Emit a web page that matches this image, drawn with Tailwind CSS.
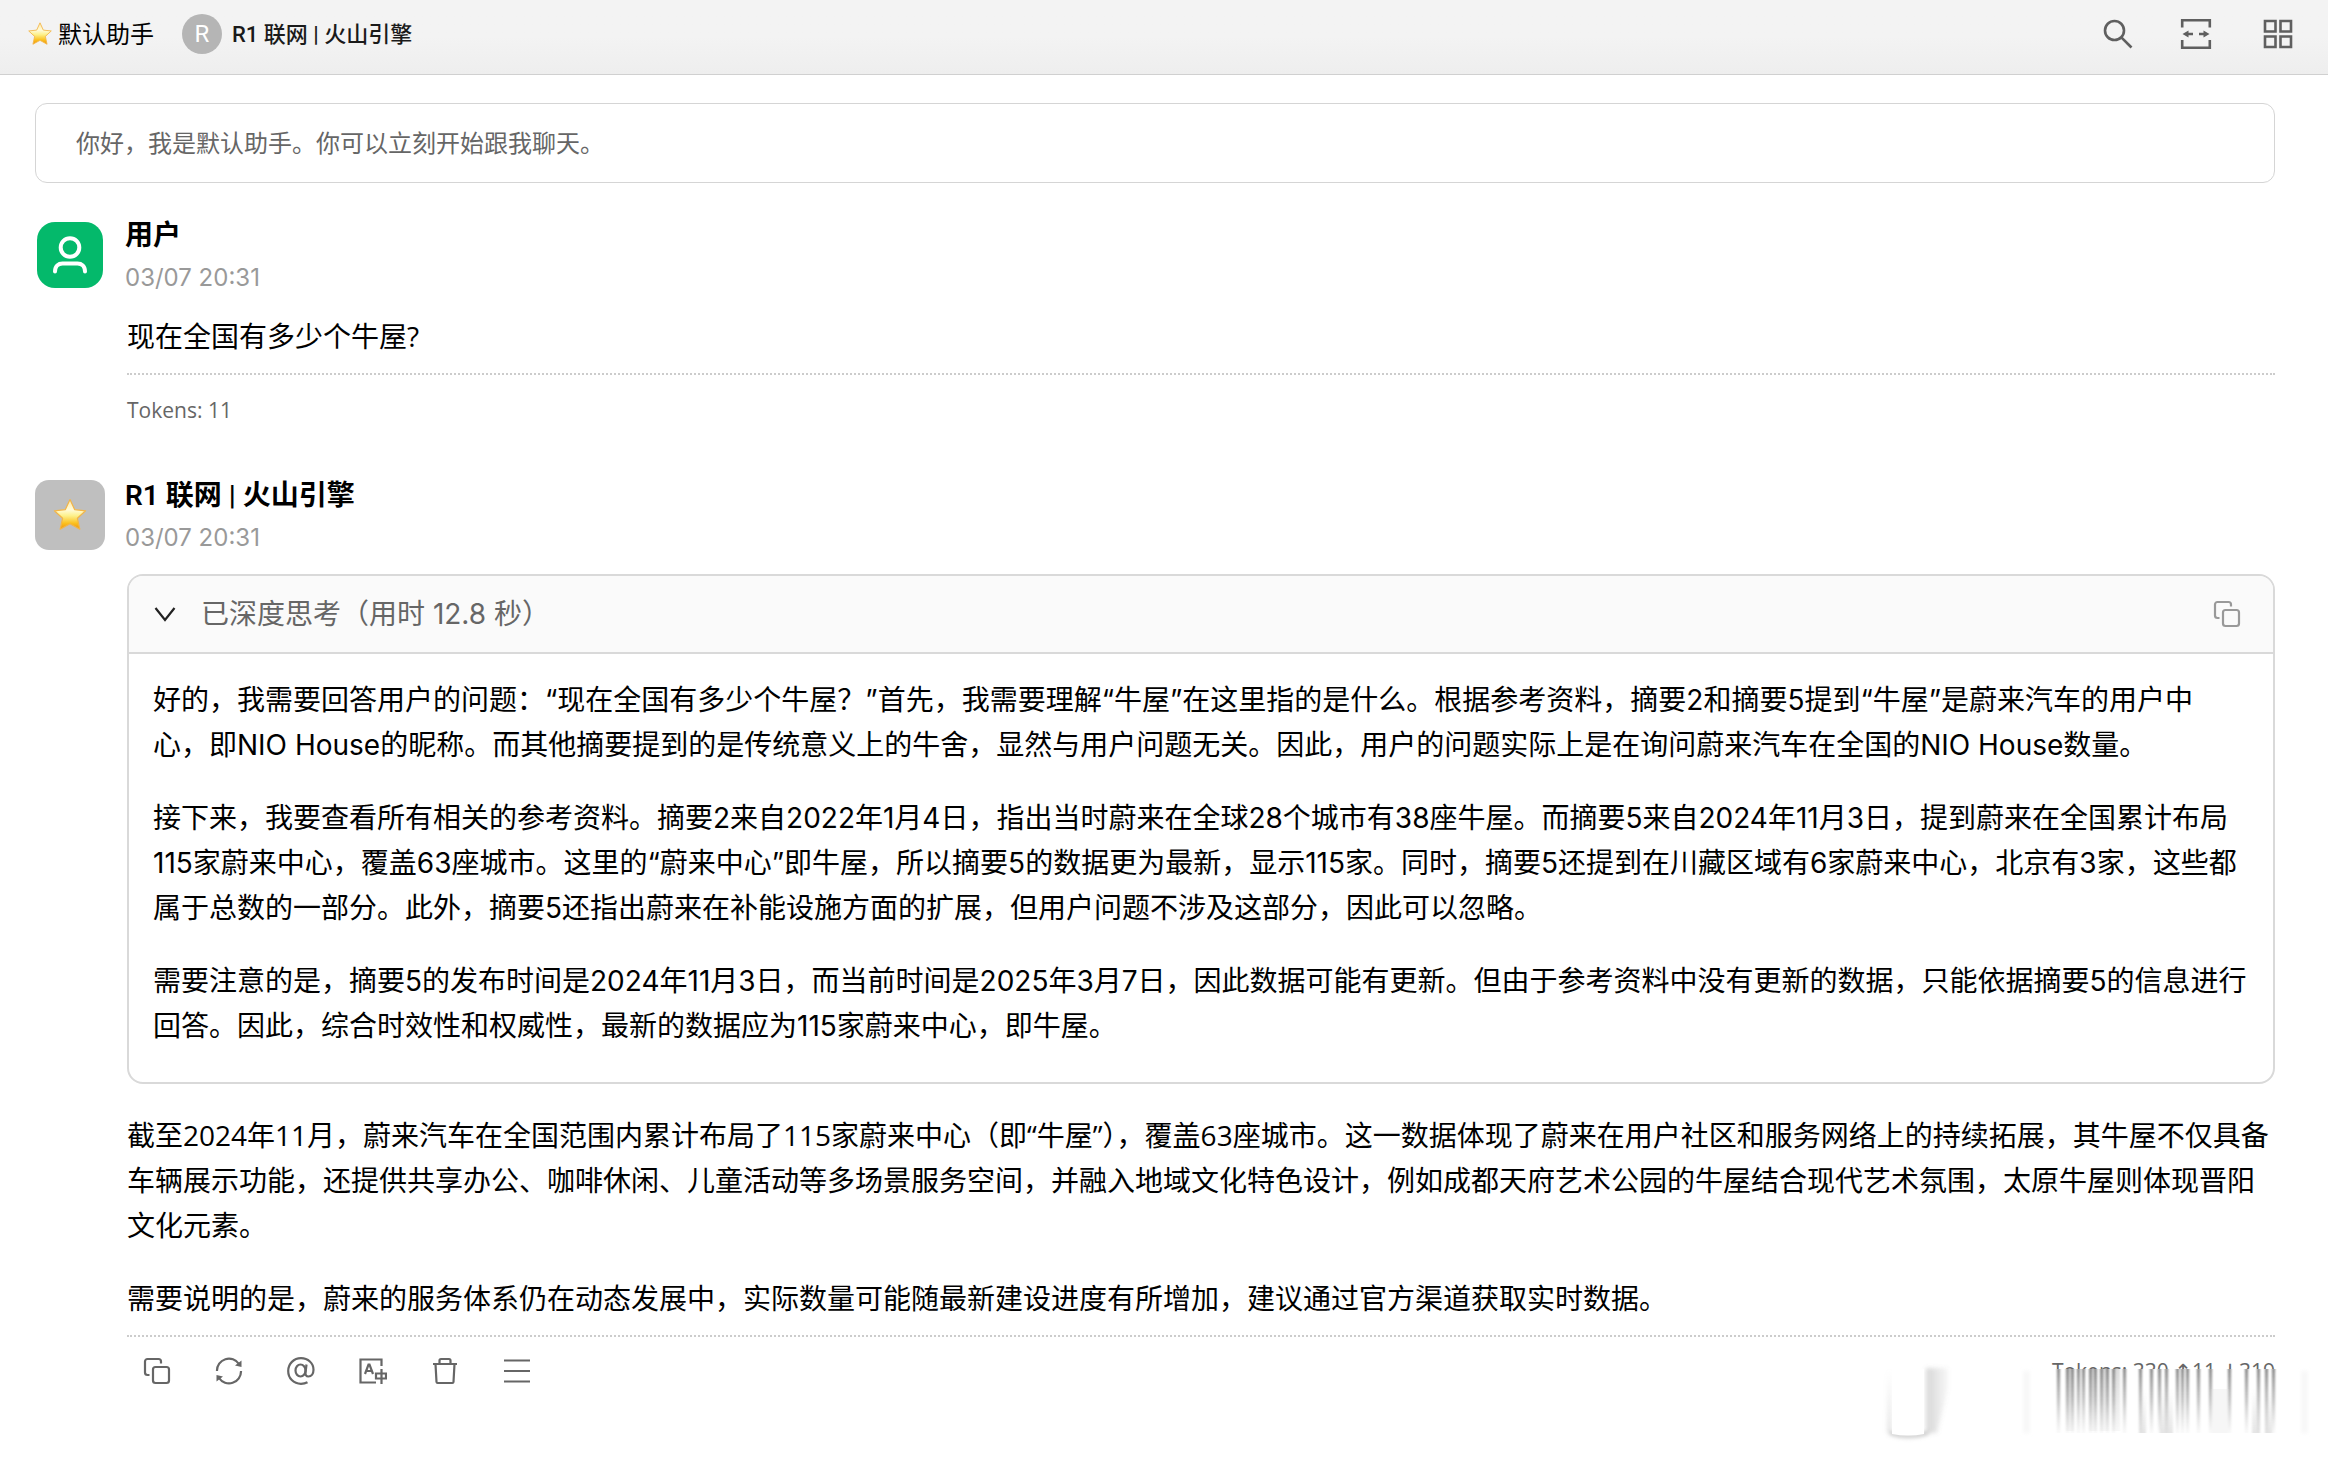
<!DOCTYPE html>
<html lang="zh-CN">

<head>
    <meta charset="UTF-8">
    <meta name="viewport" content="width=device-width, initial-scale=1.0">
    <title>默认助手</title>
    <script src="https://cdn.jsdelivr.net/npm/@tailwindcss/browser@4"></script>
</head>

<body class="min-h-screen bg-white text-black font-['Open_Sans','Noto_Sans_CJK_SC',sans-serif]">
    <!-- shared symbols -->
    <svg class="absolute size-0">
        <defs>
            <linearGradient id="gold" x1="0" y1="0" x2="0" y2="1">
                <stop offset="0" stop-color="#ffe9a8" />
                <stop offset="0.350" stop-color="#fffbd8" />
                <stop offset="0.550" stop-color="#fdf08a" />
                <stop offset="0.800" stop-color="#fbc01e" />
                <stop offset="1" stop-color="#ee930c" />
            </linearGradient>
        </defs>
        <symbol id="star" viewBox="0 0 36 36">
            <path d="M18 2.500 22.600 12.600 33.600 13.800 25.400 21.300 27.800 32.200 18 26.800 8.200 32.200 10.600 21.300 2.400 13.800 13.400 12.600Z"
                fill="url(#gold)" stroke="#f2b548" stroke-width="1.200" stroke-linejoin="round" />
        </symbol>
        <symbol id="copy" viewBox="0 0 28 28">
            <g fill="none" stroke="currentColor" stroke-width="2.200">
                <rect x="10" y="10" width="16" height="16" rx="2.500" />
                <path d="M6.500 18H4.500A2.500 2.500 0 0 1 2 15.500V4.500A2.500 2.500 0 0 1 4.500 2H15.500A2.500 2.500 0 0 1 18 4.500V6.500" />
            </g>
        </symbol>
    </svg>

    <!-- Top bar -->
    <header class="flex items-center justify-between h-[75px] pb-[6px] pl-[27px] pr-[34px] border-b border-[#d0d0d0] bg-linear-to-b from-[#f3f3f3] from-50% to-[#eee]">
        <div class="flex items-center">
            <button class="flex items-center gap-[5px] text-2xl">
                <svg class="size-[26px]"><use href="#star" /></svg>默认助手
            </button>
            <button class="flex items-center gap-[10px] ml-7 text-[22px] font-medium text-[#1a1a1a] font-['Roboto','Noto_Sans_CJK_SC',sans-serif]">
                <span class="flex items-center justify-center size-10 rounded-full bg-[#b5b5b5] text-white text-2xl font-normal">R</span>
                R1 联网 | 火山引擎
            </button>
        </div>
        <nav class="flex items-center gap-[46px] text-[#5f5f5f]">
            <button aria-label="搜索"><svg class="size-8" viewBox="0 0 32 32" fill="none" stroke="currentColor" stroke-width="2.600">
                    <circle cx="12.500" cy="12.500" r="9.500" /><path d="M19.300 19.300 29.500 29.500" />
                </svg></button>
            <button class="mr-1" aria-label="宽度"><svg class="size-8" viewBox="0 0 32 32" fill="none" stroke="currentColor" stroke-width="2.600">
                    <path d="M2.200 9.500V2.200H29.800V9.500M2.200 22V29.800H29.800V22" />
                    <path d="M7 16H13M19 16H25" />
                    <path d="M2.500 16 8.500 12.500V19.500ZM29.500 16 23.500 12.500V19.500Z" fill="currentColor" stroke="none" />
                </svg></button>
            <button aria-label="面板"><svg class="size-8" viewBox="0 0 32 32" fill="none" stroke="currentColor" stroke-width="2.600">
                    <path d="M3 3H13.500V13.500H3ZM18.500 3H29V13.500H18.500ZM3 18.500H13.500V29H3ZM18.500 18.500H29V29H18.500Z" />
                </svg></button>
        </nav>
    </header>

    <main class="pt-7 pl-[35px] pr-[53px] pb-16">
        <div class="flex items-center h-20 px-10 border border-[#d5d5d5] rounded-xl text-2xl text-[#666]">
            你好，我是默认助手。你可以立刻开始跟我聊天。
        </div>

        <!-- User message -->
        <article class="mt-9">
            <div class="flex items-start gap-5 h-[72px]">
                <div class="flex items-center justify-center self-center size-[70px]">
                    <div class="flex items-center justify-center size-[66px] rounded-[18px] bg-[#04b96b]">
                        <svg class="size-10" viewBox="0 0 40 40" fill="none" stroke="#fff" stroke-width="4" stroke-linecap="round">
                            <circle cx="20" cy="12.500" r="9.300" />
                            <path d="M5 36.500C5 31 8.500 28.500 12.500 28.500H27.500C31.500 28.500 35 31 35 36.500" />
                        </svg>
                    </div>
                </div>
                <div>
                    <h2 class="text-[28px] leading-[34px] font-semibold font-['Roboto','Noto_Sans_CJK_SC',sans-serif]">用户</h2>
                    <time class="block mt-[9px] text-2xl leading-8 text-[#999] font-[Inter]">03/07 20:31</time>
                </div>
            </div>
            <div class="ml-[92px]">
                <p class="mt-[23px] text-[28px] leading-[45px]">现在全国有多少个牛屋?</p>
                <div class="mt-[14px] pt-[19px] border-t-2 border-dotted border-[#ccc] text-[21px] leading-8 text-[#666]">Tokens: 11</div>
            </div>
        </article>

        <!-- Assistant message -->
        <article class="mt-[53px]">
            <div class="flex items-start gap-5 h-[72px]">
                <div class="flex items-center justify-center self-center size-[70px] rounded-[14px] bg-[#bfbfbf]">
                    <svg class="size-9"><use href="#star" /></svg>
                </div>
                <div>
                    <h2 class="text-[28px] leading-[34px] font-semibold font-['Roboto','Noto_Sans_CJK_SC',sans-serif]">R1 联网 | 火山引擎</h2>
                    <time class="block mt-[9px] text-2xl leading-8 text-[#999] font-[Inter]">03/07 20:31</time>
                </div>
            </div>
            <div class="ml-[92px] mt-[23px]">
                <section class="border-2 border-[#d9d9d9] rounded-2xl overflow-hidden text-[28px] leading-[45px] font-['Inter','Noto_Sans_CJK_SC',sans-serif]">
                    <div class="flex items-center h-[78px] pl-6 pr-8 border-b-2 border-[#d9d9d9] bg-[#fafafa] text-[#666]">
                        <button class="flex items-center gap-6">
                            <svg class="size-6" viewBox="0 0 24 24" fill="none" stroke="#222" stroke-width="2.200"><path d="M2.500 6 12 18 21.500 6" /></svg>
                            已深度思考（用时 12.8 秒）
                        </button>
                        <button class="ml-auto text-[#999]" aria-label="复制"><svg class="size-7"><use href="#copy" /></svg></button>
                    </div>
                    <div class="flex flex-col gap-7 px-6 pt-6 pb-[33px]">
                        <p>好的，我需要回答用户的问题：“现在全国有多少个牛屋？”首先，我需要理解“牛屋”在这里指的是什么。根据参考资料，摘要2和摘要5提到“牛屋”是蔚来汽车的用户中心，即NIO House的昵称。而其他摘要提到的是传统意义上的牛舍，显然与用户问题无关。因此，用户的问题实际上是在询问蔚来汽车在全国的NIO House数量。</p>
                        <p>接下来，我要查看所有相关的参考资料。摘要2来自2022年1月4日，指出当时蔚来在全球28个城市有38座牛屋。而摘要5来自2024年11月3日，提到蔚来在全国累计布局115家蔚来中心，覆盖63座城市。这里的“蔚来中心”即牛屋，所以摘要5的数据更为最新，显示115家。同时，摘要5还提到在川藏区域有6家蔚来中心，北京有3家，这些都属于总数的一部分。此外，摘要5还指出蔚来在补能设施方面的扩展，但用户问题不涉及这部分，因此可以忽略。</p>
                        <p>需要注意的是，摘要5的发布时间是2024年11月3日，而当前时间是2025年3月7日，因此数据可能有更新。但由于参考资料中没有更新的数据，只能依据摘要5的信息进行回答。因此，综合时效性和权威性，最新的数据应为115家蔚来中心，即牛屋。</p>
                    </div>
                </section>

                <div class="flex flex-col gap-7 mt-[29px] text-[28px] leading-[45px]">
                    <p>截至2024年11月，蔚来汽车在全国范围内累计布局了115家蔚来中心（即“牛屋”），覆盖63座城市。这一数据体现了蔚来在用户社区和服务网络上的持续拓展，其牛屋不仅具备车辆展示功能，还提供共享办公、咖啡休闲、儿童活动等多场景服务空间，并融入地域文化特色设计，例如成都天府艺术公园的牛屋结合现代艺术氛围，太原牛屋则体现晋阳文化元素。</p>
                    <p>需要说明的是，蔚来的服务体系仍在动态发展中，实际数量可能随最新建设进度有所增加，建议通过官方渠道获取实时数据。</p>
                </div>

                <!-- Actions -->
                <footer class="flex items-start justify-between mt-[14px] pt-5 pl-4 border-t-2 border-dotted border-[#ccc] text-[#666]">
                    <div class="flex gap-11">
                        <button aria-label="复制"><svg class="size-7"><use href="#copy" /></svg></button>
                        <button aria-label="重新生成"><svg class="size-7" viewBox="0 0 28 28" fill="none" stroke="currentColor" stroke-width="2.200">
                                <path d="M2 14A12 12 0 0 1 24 7M26 14A12 12 0 0 1 4 21" />
                                <path d="M26.500 3.500V10L20 8.500ZM1.500 24.500V18L8 19.500Z" fill="currentColor" stroke="none" />
                            </svg></button>
                        <button aria-label="提及"><svg class="size-7" viewBox="0 0 28 28" fill="none" stroke="currentColor" stroke-width="2.200">
                                <ellipse cx="13.500" cy="13.500" rx="5" ry="6" />
                                <path d="M19.500 7.500 18.500 15.500C18.200 18 19.300 19.500 21.300 19.500C24.500 19.500 26.500 16.500 26.500 12.800C26.500 6 21 1.200 14 1.200C6.800 1.200 1.200 6.800 1.200 14C1.200 21.200 6.500 26.800 14 26.800C16.500 26.800 18.500 26.300 20.500 25.200" />
                            </svg></button>
                        <button aria-label="翻译"><svg class="size-7" viewBox="0 0 28 28" fill="none" stroke="currentColor" stroke-width="2.200">
                                <path d="M22.500 9V2.500H1.500V25.500H17" />
                                <path d="M6 17 9.500 7.500H10.500L14 17M7.500 14H12.500" />
                                <path d="M22.500 12V27M17 16.500H27V21.500H17Z" />
                            </svg></button>
                        <button aria-label="删除"><svg class="size-7" viewBox="0 0 28 28" fill="none" stroke="currentColor" stroke-width="2.200">
                                <path d="M2 7H26M8.500 6.500V3.500Q8.500 2 10 2H18Q19.500 2 19.500 3.500V6.500M4.500 7 5.500 25Q5.600 26 6.600 26H21.400Q22.400 26 22.500 25L23.500 7" />
                            </svg></button>
                        <button aria-label="菜单"><svg class="size-7" viewBox="0 0 28 28" fill="none" stroke="currentColor" stroke-width="2.200">
                                <path d="M1 3.500H27M1 14H27M1 24.500H27" />
                            </svg></button>
                    </div>
                    <div class="relative text-[21px] leading-7 whitespace-nowrap">
                        Tokens: 330 <span class="font-['DejaVu_Sans']">↑</span>11 <span class="font-['DejaVu_Sans']">↓</span>319
                        <!-- smear over the lower part of the counter -->
                        <svg class="absolute top-3 -right-9 w-[430px] h-[76px] overflow-visible pointer-events-none" viewBox="0 0 430 76">
                            <defs>
                                <linearGradient id="streak" gradientUnits="userSpaceOnUse" x1="0" y1="0" x2="0" y2="64">
                                    <stop offset="0" stop-color="#777" stop-opacity="0.900" />
                                    <stop offset="0.500" stop-color="#999" stop-opacity="0.600" />
                                    <stop offset="1" stop-color="#bbb" stop-opacity="0.100" />
                                </linearGradient>
                                <linearGradient id="fade" x1="0" y1="0" x2="0" y2="1">
                                    <stop offset="0" stop-color="#888" stop-opacity="0.300" />
                                    <stop offset="1" stop-color="#888" stop-opacity="0.060" />
                                </linearGradient>
                                <linearGradient id="rise" x1="0" y1="0" x2="0" y2="1">
                                    <stop offset="0" stop-color="#999" stop-opacity="0" />
                                    <stop offset="1" stop-color="#999" stop-opacity="0.250" />
                                </linearGradient>
                                <linearGradient id="ghost" x1="0" y1="0" x2="1" y2="0">
                                    <stop offset="0" stop-color="#777" stop-opacity="0.300" />
                                    <stop offset="1" stop-color="#777" stop-opacity="0.050" />
                                </linearGradient>
                                <filter id="soft" filterUnits="userSpaceOnUse" x="-20" y="-20" width="480" height="120">
                                    <feGaussianBlur stdDeviation="0.900 0.200" />
                                </filter>
                                <filter id="softer" filterUnits="userSpaceOnUse" x="-20" y="-20" width="480" height="120">
                                    <feGaussianBlur stdDeviation="2" />
                                </filter>
                            </defs>
                            <rect x="160" y="0" width="240" height="76" fill="#fff" />
                            <g filter="url(#soft)">
                                <path fill="url(#streak)"
                                    d="M176 0h3v64h-3zM185 0h3v64h-3zM190 0h3v64h-3zM196 0h3v64h-3zM201 0h3v64h-3zM208 0h3v64h-3zM213 0h3v64h-3zM219 0h3v64h-3zM225 0h3v64h-3zM231 0h3v64h-3zM242 0h3v64h-3zM258 0h3v64h-3zM269 0h3v64h-3zM277 0h3v64h-3zM284 0h3v64h-3zM295 0h3v64h-3zM300 0h3v64h-3zM305 0h3v64h-3zM316 0h3v64h-3zM328 0h3v64h-3zM347 0h3v64h-3zM364 0h3v64h-3zM376 0h3v64h-3zM384 0h3v64h-3zM391 0h3v64h-3z" />
                                <path fill="url(#fade)" d="M185 0h8v62h-8zM208 0h8v62h-8zM219 0h9v62h-9zM231 0h8v62h-8z" />
                                <path fill="url(#rise)" d="M258 20h7v44h-7zM279 20h13v44h-13zM371 20h8v44h-8zM384 20h7v44h-7z" />
                                <path fill="#f6f6f6" d="M331 20h16v44h-16z" />
                            </g>
                            <g filter="url(#softer)">
                                <path fill="url(#ghost)" d="M45 -1H67V20L56 64H45Z" />
                                <path fill="url(#rise)" d="M6 0H11V64H6Z" />
                                <path fill="#f5f5f5" d="M143 2h5v62h-5zM421 2h5v62h-5z" />
                                <path d="M9 64Q27 70 47 64" fill="none" stroke="#999" stroke-width="3" stroke-opacity="0.700" />
                            </g>
                            <path d="M11 0H43V65Q27 68 11 65Z" fill="#fff" />
                        </svg>
                    </div>
                </footer>
            </div>
        </article>
    </main>
</body>

</html>
